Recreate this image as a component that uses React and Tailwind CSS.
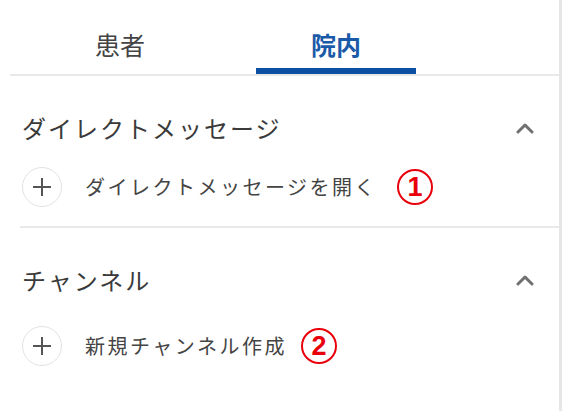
import React, { useState } from "react";

const font = { fontFamily: '"Noto Sans CJK JP", "Noto Sans", sans-serif' };

function ChevronUp() {
  return (
    <svg width="18" height="12" viewBox="0 0 18 12" fill="none">
      <polyline
        points="2,10 9,3 16,10"
        stroke="#707070"
        strokeWidth="3"
        strokeLinecap="round"
        strokeLinejoin="round"
      />
    </svg>
  );
}

function PlusCircle() {
  return (
    <div className="w-[40px] h-[40px] rounded-full border border-[#e2e2e2] flex items-center justify-center shrink-0">
      <svg width="20" height="20" viewBox="0 0 20 20">
        <line x1="10" y1="1" x2="10" y2="19" stroke="#555" strokeWidth="2" />
        <line x1="1" y1="10" x2="19" y2="10" stroke="#555" strokeWidth="2" />
      </svg>
    </div>
  );
}

function Badge({ n }) {
  return (
    <div className="w-[36px] h-[36px] rounded-full border-2 border-[#e8000b] flex items-center justify-center shrink-0">
      <span className="text-[27px] font-bold leading-none text-[#e8000b] font-['Liberation_Sans',sans-serif]">
        {n}
      </span>
    </div>
  );
}

export default function App() {
  const [tab, setTab] = useState(1);
  const tabs = ["患者", "院内"];

  return (
    <div
      className="w-[562px] h-[411px] bg-white border-r-[3px] border-[#e6e6e6] overflow-hidden"
      style={font}
    >
      {/* Tabs */}
      <div className="ml-[10px] border-b-2 border-[#e8e8e8]">
        <div className="ml-[2px] flex">
          {tabs.map((t, i) => (
            <button
              key={t}
              onClick={() => setTab(i)}
              className="w-[216px] flex flex-col items-center pt-[29px]"
            >
              <span
                className={`text-[25px] leading-[30px] ${
                  tab === i ? "font-bold text-[#1a5aa8]" : "text-[#444]"
                }`}
              >
                {t}
              </span>
              <div
                className={`mt-[9px] w-[160px] h-[6px] ${
                  tab === i ? "bg-[#0d4fa3]" : "bg-transparent"
                }`}
              />
            </button>
          ))}
        </div>
      </div>

      {/* Direct messages */}
      <div className="pl-[22px] pr-[25px] pt-[30px]">
        <div className="h-[44px] flex items-center justify-between">
          <span className="text-[24px] tracking-[2px] text-[#3a3a3a]">
            ダイレクトメッセージ
          </span>
          <ChevronUp />
        </div>
        <div className="mt-[15px] h-[44px] flex items-center">
          <PlusCircle />
          <span className="ml-[23px] text-[20px] tracking-[2.5px] text-[#444]">
            ダイレクトメッセージを開く
          </span>
          <div className="ml-[20px]">
            <Badge n="1" />
          </div>
        </div>
      </div>
      <div className="ml-[20px] mt-[17px] border-t-2 border-[#e8e8e8]" />

      {/* Channels */}
      <div className="pl-[22px] pr-[25px] pt-[30px]">
        <div className="h-[44px] flex items-center justify-between">
          <span className="text-[24px] tracking-[2px] text-[#3a3a3a]">
            チャンネル
          </span>
          <ChevronUp />
        </div>
        <div className="mt-[22px] h-[44px] flex items-center">
          <PlusCircle />
          <span className="ml-[23px] text-[20px] tracking-[2.5px] text-[#444]">
            新規チャンネル作成
          </span>
          <div className="ml-[14px]">
            <Badge n="2" />
          </div>
        </div>
      </div>
    </div>
  );
}
